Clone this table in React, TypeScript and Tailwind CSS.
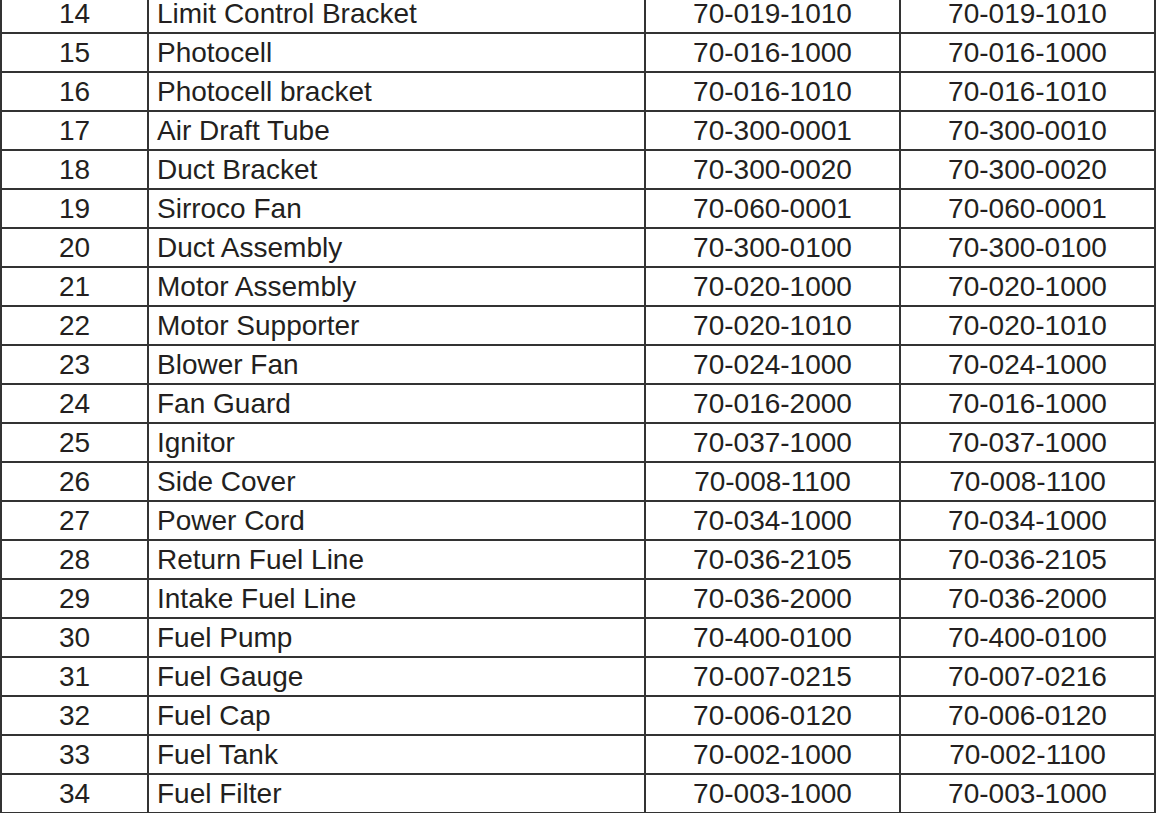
import React from 'react';

// Filas de la tabla de repuestos
const rows: [number, string, string, string][] = [
  [14, 'Limit Control Bracket', '70-019-1010', '70-019-1010'],
  [15, 'Photocell', '70-016-1000', '70-016-1000'],
  [16, 'Photocell bracket', '70-016-1010', '70-016-1010'],
  [17, 'Air Draft Tube', '70-300-0001', '70-300-0010'],
  [18, 'Duct Bracket', '70-300-0020', '70-300-0020'],
  [19, 'Sirroco Fan', '70-060-0001', '70-060-0001'],
  [20, 'Duct Assembly', '70-300-0100', '70-300-0100'],
  [21, 'Motor Assembly', '70-020-1000', '70-020-1000'],
  [22, 'Motor Supporter', '70-020-1010', '70-020-1010'],
  [23, 'Blower Fan', '70-024-1000', '70-024-1000'],
  [24, 'Fan Guard', '70-016-2000', '70-016-1000'],
  [25, 'Ignitor', '70-037-1000', '70-037-1000'],
  [26, 'Side Cover', '70-008-1100', '70-008-1100'],
  [27, 'Power Cord', '70-034-1000', '70-034-1000'],
  [28, 'Return Fuel Line', '70-036-2105', '70-036-2105'],
  [29, 'Intake Fuel Line', '70-036-2000', '70-036-2000'],
  [30, 'Fuel Pump', '70-400-0100', '70-400-0100'],
  [31, 'Fuel Gauge', '70-007-0215', '70-007-0216'],
  [32, 'Fuel Cap', '70-006-0120', '70-006-0120'],
  [33, 'Fuel Tank', '70-002-1000', '70-002-1100'],
  [34, 'Fuel Filter', '70-003-1000', '70-003-1000'],
];

export default function App() {
  return (
    <div className="w-[1156px] h-[813px] overflow-hidden bg-white">
      <div
        className="mt-[-7px] grid grid-cols-[145px_495px_253px_253px] gap-[2px] bg-[#333333] p-[2px] text-[28px] leading-[37px] text-[#231f20]"
        style={{ fontFamily: '"Liberation Sans", Arial, sans-serif' }}
      >
        {rows.map(([num, name, a, b]) => (
          <React.Fragment key={num}>
            <div className="h-[37px] bg-white text-center">{num}</div>
            <div className="h-[37px] bg-white pl-[8px] whitespace-nowrap">{name}</div>
            <div className="h-[37px] bg-white text-center">{a}</div>
            <div className="h-[37px] bg-white text-center">{b}</div>
          </React.Fragment>
        ))}
      </div>
    </div>
  );
}
